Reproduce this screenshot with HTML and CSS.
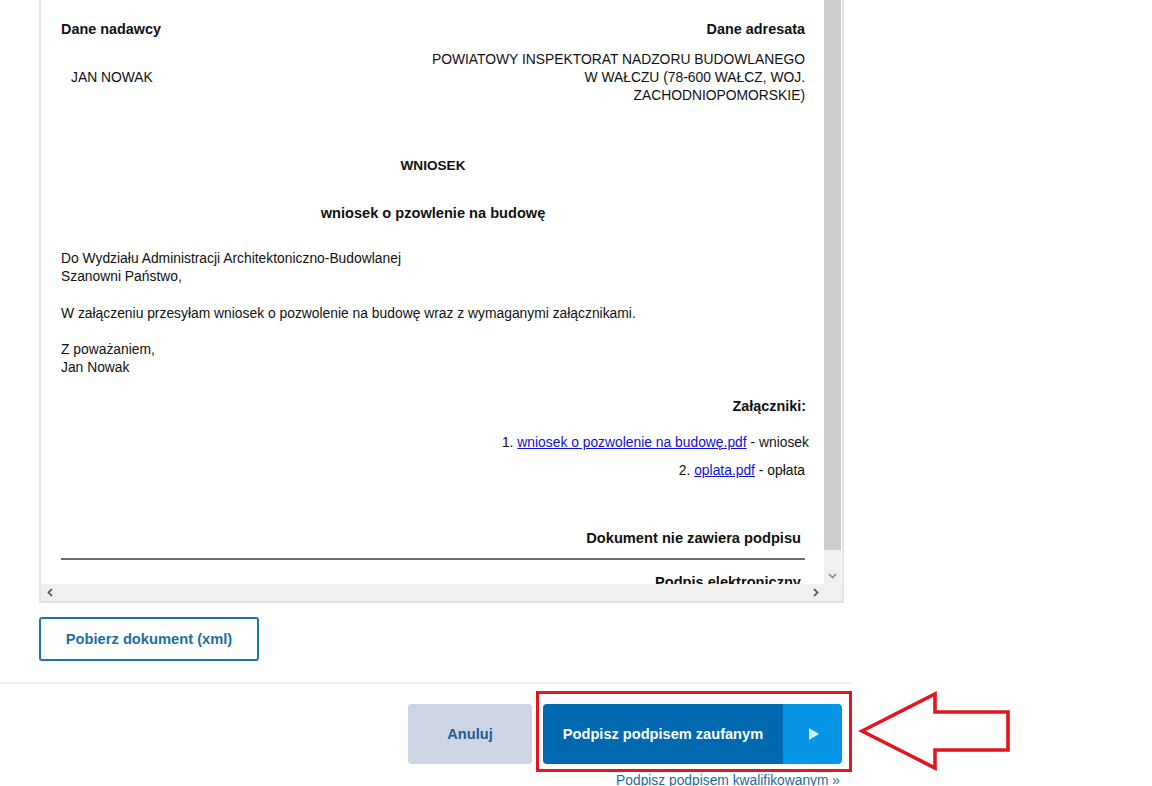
FILE: index.html
```html
<!DOCTYPE html>
<html lang="pl">
<head>
<meta charset="utf-8">
<title>Podpis dokumentu</title>
<link rel="stylesheet" href="styles.css">
</head>
<body>
<div class="page">
  <div class="viewer">
    <div class="viewport">
      <div class="doc">
        <table class="parties">
          <tr>
            <th class="left">Dane nadawcy</th>
            <th class="right">Dane adresata</th>
          </tr>
          <tr>
            <td class="sender">JAN NOWAK</td>
            <td class="addressee">POWIATOWY INSPEKTORAT NADZORU BUDOWLANEGO W WAŁCZU (78-600 WAŁCZ, WOJ. ZACHODNIOPOMORSKIE)</td>
          </tr>
        </table>
        <div class="title">WNIOSEK</div>
        <div class="subtitle">wniosek o pzowlenie na budowę</div>
        <p class="para">Do Wydziału Administracji Architektoniczno-Budowlanej<br>Szanowni Państwo,</p>
        <p class="para gap19">W załączeniu przesyłam wniosek o pozwolenie na budowę wraz z wymaganymi załącznikami.</p>
        <p class="para gap18">Z poważaniem,<br>Jan Nowak</p>
        <div class="att-head">Załączniki:</div>
        <ol class="att-list">
          <li class="att-1">1. <a href="#">wniosek o pozwolenie na budowę.pdf</a> - wniosek</li>
          <li class="att-2">2. <a href="#">oplata.pdf</a> - opłata</li>
        </ol>
        <div class="nosign">Dokument nie zawiera podpisu</div>
        <div class="rule"></div>
        <div class="esign">Podpis elektroniczny</div>
      </div>
    </div>
    <div class="vscroll">
      <div class="vthumb"></div>
      <div class="vtrack"></div>
      <div class="vbtn">
        <svg width="9" height="6" viewBox="0 0 9 6"><path d="M1 1 L4.5 4.5 L8 1" fill="none" stroke="#8a8a8a" stroke-width="1.6"/></svg>
      </div>
    </div>
    <div class="hscroll">
      <div class="hbtn">
        <svg width="6" height="9" viewBox="0 0 6 9"><path d="M5 1 L1.5 4.5 L5 8" fill="none" stroke="#505050" stroke-width="1.7"/></svg>
      </div>
      <div class="htrack"></div>
      <div class="hbtn">
        <svg width="6" height="9" viewBox="0 0 6 9"><path d="M1 1 L4.5 4.5 L1 8" fill="none" stroke="#505050" stroke-width="1.7"/></svg>
      </div>
    </div>
    <div class="corner"></div>
  </div>

  <div class="download-wrap">
    <button class="btn-outline">Pobierz dokument (xml)</button>
  </div>

  <div class="footer">
    <div class="actions">
      <button class="btn-cancel">Anuluj</button>
      <button class="btn-main">
        <span class="main-label">Podpisz podpisem zaufanym</span>
        <span class="main-arrow"><span class="tri"></span></span>
      </button>
    </div>
    <div class="alt-link"><a href="#">Podpisz podpisem kwalifikowanym »</a></div>
    <div class="highlight"></div>
    <svg class="pointer" width="156" height="84" viewBox="0 0 156 84">
      <polygon points="4,41 77,4 77,22 150,22 150,60 77,60 77,78" fill="#ffffff" stroke="#e3161f" stroke-width="3.6" stroke-linejoin="miter"/>
    </svg>
  </div>
</div>
</body>
</html>
```

FILE: styles.css
```css
* { box-sizing: border-box; }

html, body {
  margin: 0;
  padding: 0;
  background: #ffffff;
}

body {
  font-family: "Liberation Sans", Arial, sans-serif;
  color: #111111;
  overflow: hidden;
  height: 786px;
}

.page {
  width: 852px;
  position: relative;
}

/* ---------- document viewer ---------- */
.viewer {
  margin-left: 39px;
  width: 805px;
  border-left: 2px solid #e4e4e4;
  border-right: 2px solid #e4e4e4;
  border-bottom: 2px solid #e4e4e4;
  display: grid;
  grid-template-columns: 783px 18px;
  grid-template-rows: 584px 17px;
}

.viewport {
  overflow: hidden;
  background: #ffffff;
}

.doc {
  padding: 20px 19px 0 20px;
  width: 783px;
  font-size: 13.85px;
  line-height: 18px;
}

.parties {
  width: 100%;
  border-collapse: collapse;
}

.parties th {
  font-size: 14.4px;
  font-weight: bold;
  padding: 0 0 12px 0;
  line-height: 18px;
}

.parties th.left { text-align: left; }
.parties th.right { text-align: right; }

.parties td {
  padding: 0;
  line-height: 18px;
  vertical-align: middle;
}

.sender {
  padding-left: 10px !important;
}

.addressee {
  width: 380px;
  text-align: right;
}

.title {
  margin-top: 53px;
  text-align: center;
  font-weight: bold;
  font-size: 13.6px;
}

.subtitle {
  margin-top: 29px;
  text-align: center;
  font-weight: bold;
  font-size: 14.6px;
}

.para {
  margin: 27px 0 0 0;
}

.para.gap19 { margin-top: 19px; }
.para.gap18 { margin-top: 18px; }

.att-head {
  margin-top: 21px;
  text-align: right;
  font-weight: bold;
  font-size: 14.4px;
  margin-right: -1px;
}

.att-list {
  list-style: none;
  margin: 18px 0 0 0;
  padding: 0;
  text-align: right;
}

.att-list li {
  margin-bottom: 10px;
}

.att-list .att-1 { margin-right: -4px; }

.att-list a {
  color: #1010d8;
  text-decoration: underline;
}

.nosign {
  margin-top: 50px;
  text-align: right;
  font-weight: bold;
  font-size: 14.65px;
  padding-right: 4px;
}

.rule {
  margin-top: 11px;
  height: 2px;
  background: #6a6a6a;
}

.esign {
  margin-top: 13px;
  text-align: right;
  font-weight: bold;
  font-size: 14.6px;
  padding-right: 4px;
}

/* ---------- fake scrollbars ---------- */
.vscroll {
  display: flex;
  flex-direction: column;
  background: #ffffff;
}

.vthumb {
  width: 17px;
  height: 550px;
  background: #cdcdcd;
}

.vtrack {
  width: 17px;
  height: 17px;
  background: #f0f0f0;
}

.vbtn {
  width: 17px;
  height: 17px;
  background: #f0f0f0;
  display: flex;
  align-items: center;
  justify-content: center;
}

.hscroll {
  display: flex;
  background: #f0f0f0;
}

.hbtn {
  width: 17px;
  height: 17px;
  display: flex;
  align-items: center;
  justify-content: center;
}

.htrack {
  flex: 1;
}

.corner {
  background: #f0f0f0;
}

/* ---------- download button ---------- */
.download-wrap {
  padding: 14px 0 0 39px;
}

.btn-outline {
  width: 220px;
  height: 44px;
  border: 2px solid #1b76aa;
  border-radius: 3px;
  background: #ffffff;
  color: #1b6fa6;
  font-family: "Liberation Sans", Arial, sans-serif;
  font-weight: bold;
  font-size: 14.7px;
  padding: 0;
}

/* ---------- footer ---------- */
.footer {
  position: relative;
  margin-top: 21px;
  border-top: 2px solid #efefef;
  padding-top: 20px;
}

.actions {
  display: flex;
  justify-content: flex-end;
  gap: 11px;
  padding-right: 10px;
}

.btn-cancel {
  width: 124px;
  height: 60px;
  border: none;
  border-radius: 4px;
  background: #cdd4e3;
  color: #1e5c96;
  font-family: "Liberation Sans", Arial, sans-serif;
  font-weight: bold;
  font-size: 14.6px;
  padding: 0;
}

.btn-main {
  display: flex;
  width: 299px;
  height: 60px;
  border: none;
  border-radius: 4px;
  overflow: hidden;
  padding: 0;
  font-family: "Liberation Sans", Arial, sans-serif;
  font-weight: bold;
  font-size: 14.6px;
  color: #ffffff;
}

.main-label {
  width: 240px;
  height: 60px;
  background: #0069b0;
  display: flex;
  align-items: center;
  justify-content: center;
}

.main-arrow {
  flex: 1;
  height: 60px;
  background: #0795e5;
  display: flex;
  align-items: center;
  justify-content: center;
}

.tri {
  width: 0;
  height: 0;
  border-top: 6px solid transparent;
  border-bottom: 6px solid transparent;
  border-left: 10px solid #d6ecfb;
  margin-left: 2px;
}

.alt-link {
  margin-top: 8px;
  text-align: right;
  padding-right: 12px;
  font-size: 13.8px;
  line-height: 18px;
}

.alt-link a {
  color: #1a6ca5;
  text-decoration: none;
}

.highlight {
  position: absolute;
  left: 536px;
  top: 7px;
  width: 316px;
  height: 81px;
  border: 3px solid #e3161f;
}

.pointer {
  position: absolute;
  left: 858px;
  top: 6px;
}
```
